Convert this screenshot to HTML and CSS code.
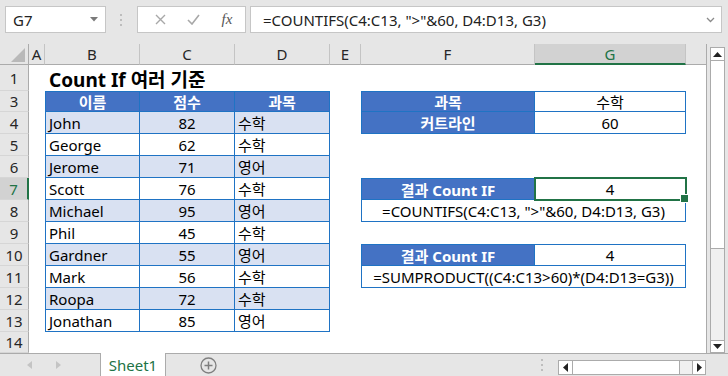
FILE: index.html
```html
<!DOCTYPE html>
<html lang="ko">
<head>
    <meta charset="UTF-8">
    <title>Count If 여러 기준</title>
    <link rel="stylesheet" href="styles.css">
</head>
<body>
    <div class="formula-bar">
        <div class="name-box">
            <span>G7</span>
            <svg width="8" height="5" viewBox="0 0 8 5"><path d="M0 0h8L4 4.5z" fill="#7a7a7a"/></svg>
        </div>
        <div class="grip">
            <svg width="3" height="12" viewBox="0 0 3 12"><rect x="0" y="0" width="2" height="2" fill="#bdbdbd"/><rect x="0" y="5" width="2" height="2" fill="#bdbdbd"/><rect x="0" y="10" width="2" height="2" fill="#bdbdbd"/></svg>
        </div>
        <div class="fx-box">
            <svg width="11" height="11" viewBox="0 0 11 11"><path d="M1 1l9 9M10 1l-9 9" stroke="#a8a8a8" stroke-width="1.4" fill="none"/></svg>
            <svg width="13" height="11" viewBox="0 0 13 11"><path d="M1 6l4 4 7-9" stroke="#a8a8a8" stroke-width="1.6" fill="none"/></svg>
            <span class="fx">fx</span>
        </div>
        <div class="formula-input">
            <span>=COUNTIFS(C4:C13, "&gt;"&amp;60, D4:D13, G3)</span>
            <svg width="9" height="6" viewBox="0 0 9 6"><path d="M1 1l3.5 3.5L8 1" stroke="#8a8a8a" stroke-width="1.3" fill="none"/></svg>
        </div>
    </div>

    <div class="workspace">
        <div class="sheet">
            <div class="corner"><svg width="14" height="14" viewBox="0 0 14 14"><path d="M14 0v14H0z" fill="#b9b9b9"/></svg></div>
            <div class="ch">A</div>
            <div class="ch">B</div>
            <div class="ch">C</div>
            <div class="ch">D</div>
            <div class="ch">E</div>
            <div class="ch">F</div>
            <div class="ch active">G</div>
            <div class="ch end"></div>

            <div class="rh">1</div>
            <div></div>
            <div class="title">Count If 여러 기준</div>

            <div class="rh">3</div>
            <div></div>
            <div class="cell th first top">이름</div>
            <div class="cell th top">점수</div>
            <div class="cell th top">과목</div>
            <div></div>
            <div class="cell th first top">과목</div>
            <div class="cell num top">수학</div>
            <div></div>

            <div class="rh">4</div>
            <div></div>
            <div class="cell band first">John</div>
            <div class="cell band num">82</div>
            <div class="cell band">수학</div>
            <div></div>
            <div class="cell th first">커트라인</div>
            <div class="cell num">60</div>
            <div></div>

            <div class="rh">5</div>
            <div></div>
            <div class="cell first">George</div>
            <div class="cell num">62</div>
            <div class="cell">수학</div>
            <div class="rest"></div>

            <div class="rh">6</div>
            <div></div>
            <div class="cell band first">Jerome</div>
            <div class="cell band num">71</div>
            <div class="cell band">영어</div>
            <div class="rest"></div>

            <div class="rh active">7</div>
            <div></div>
            <div class="cell first">Scott</div>
            <div class="cell num">76</div>
            <div class="cell">수학</div>
            <div></div>
            <div class="cell th first top">결과 Count IF</div>
            <div class="cell num top selected">4</div>
            <div></div>

            <div class="rh">8</div>
            <div></div>
            <div class="cell band first">Michael</div>
            <div class="cell band num">95</div>
            <div class="cell band">영어</div>
            <div></div>
            <div class="cell num first wide">=COUNTIFS(C4:C13, "&gt;"&amp;60, D4:D13, G3)</div>
            <div></div>

            <div class="rh">9</div>
            <div></div>
            <div class="cell first">Phil</div>
            <div class="cell num">45</div>
            <div class="cell">수학</div>
            <div class="rest"></div>

            <div class="rh">10</div>
            <div></div>
            <div class="cell band first">Gardner</div>
            <div class="cell band num">55</div>
            <div class="cell band">영어</div>
            <div></div>
            <div class="cell th first top">결과 Count IF</div>
            <div class="cell num top">4</div>
            <div></div>

            <div class="rh">11</div>
            <div></div>
            <div class="cell first">Mark</div>
            <div class="cell num">56</div>
            <div class="cell">수학</div>
            <div></div>
            <div class="cell num first wide">=SUMPRODUCT((C4:C13&gt;60)*(D4:D13=G3))</div>
            <div></div>

            <div class="rh">12</div>
            <div></div>
            <div class="cell band first">Roopa</div>
            <div class="cell band num">72</div>
            <div class="cell band">수학</div>
            <div class="rest"></div>

            <div class="rh">13</div>
            <div></div>
            <div class="cell first">Jonathan</div>
            <div class="cell num">85</div>
            <div class="cell">영어</div>
            <div class="rest"></div>

            <div class="rh">14</div>
            <div class="empty-row"></div>
        </div>

        <div class="vscroll">
            <div class="sbtn"><svg width="9" height="5" viewBox="0 0 9 5"><path d="M0 5h9L4.5 0z" fill="#222"/></svg></div>
            <div class="vthumb"></div>
            <div class="vtrack"></div>
            <div class="sbtn down"><svg width="9" height="5" viewBox="0 0 9 5"><path d="M0 0h9L4.5 5z" fill="#222"/></svg></div>
        </div>
    </div>

    <div class="tabbar">
        <div class="tabnav">
            <svg width="5" height="8" viewBox="0 0 5 8"><path d="M5 0v8L0 4z" fill="#c4c4c4"/></svg>
            <svg width="5" height="8" viewBox="0 0 5 8"><path d="M0 0v8L5 4z" fill="#c4c4c4"/></svg>
        </div>
        <div class="tab">Sheet1</div>
        <div class="add-sheet">
            <svg width="17" height="17" viewBox="0 0 17 17"><circle cx="8.5" cy="8.5" r="7.5" stroke="#7f7f7f" stroke-width="1.3" fill="none"/><path d="M8.5 4.5v8M4.5 8.5h8" stroke="#7f7f7f" stroke-width="1.5"/></svg>
        </div>
        <div class="spacer"></div>
        <div class="hgrip">
            <svg width="3" height="12" viewBox="0 0 3 12"><rect x="0" y="0" width="2" height="2" fill="#bdbdbd"/><rect x="0" y="5" width="2" height="2" fill="#bdbdbd"/><rect x="0" y="10" width="2" height="2" fill="#bdbdbd"/></svg>
        </div>
        <div class="hscroll">
            <div class="hbtn"><svg width="5" height="9" viewBox="0 0 5 9"><path d="M5 0v9L0 4.5z" fill="#222"/></svg></div>
            <div class="hthumb"></div>
            <div class="htrack"></div>
            <div class="hbtn right"><svg width="5" height="9" viewBox="0 0 5 9"><path d="M0 0v9L5 4.5z" fill="#222"/></svg></div>
        </div>
    </div>
</body>
</html>
```

FILE: styles.css
```css
* {
    margin: 0;
    padding: 0;
    box-sizing: border-box;
}
body {
    width: 728px;
    height: 376px;
    overflow: hidden;
    background: #e6e6e6;
    font-family: "Noto Sans", "Noto Sans CJK KR", sans-serif;
    color: #000;
}

/* formula bar */
.formula-bar {
    height: 44px;
    display: flex;
    align-items: flex-start;
    padding: 6px 6px 0 5px;
}
.name-box {
    width: 101px;
    height: 27px;
    background: #fff;
    border: 1px solid #c6c6c6;
    display: flex;
    align-items: center;
    justify-content: space-between;
    padding: 0 7px 0 7px;
    font-size: 15px;
    color: #222;
}
.grip {
    width: 31px;
    height: 27px;
    display: flex;
    align-items: center;
    justify-content: center;
}
.fx-box {
    width: 109px;
    height: 27px;
    background: #fff;
    border: 1px solid #c6c6c6;
    display: flex;
    align-items: center;
    justify-content: space-around;
    padding: 0 2px 0 6px;
}
.fx {
    font-family: "Liberation Serif", serif;
    font-style: italic;
    font-size: 15px;
    color: #555;
}
.formula-input {
    flex: 1;
    margin-left: 4px;
    height: 27px;
    background: #fff;
    border: 1px solid #c6c6c6;
    display: flex;
    align-items: center;
    justify-content: space-between;
    padding: 0 6px 0 12px;
    font-size: 15px;
    color: #222;
    white-space: pre;
}

/* worksheet */
.workspace {
    display: flex;
    height: 309px;
}
.sheet {
    width: 707px;
    background: #fff;
    border-right: 1px solid #ababab;
    display: grid;
    grid-template-columns: 29px 16px 95px 95px 95px 31px 174px 151px 1fr;
    grid-template-rows: 21px 26px 21px repeat(10, 22px) 21px;
    font-size: 15px;
}
.corner {
    background: #e6e6e6;
    border-right: 1px solid #ababab;
    border-bottom: 1px solid #ababab;
    display: flex;
    align-items: flex-end;
    justify-content: flex-end;
    padding: 0 3px 2px 0;
}
.ch {
    background: #e6e6e6;
    border-right: 1px solid #c4c4c4;
    border-bottom: 1px solid #ababab;
    display: flex;
    align-items: center;
    justify-content: center;
    color: #262626;
}
.ch.active {
    background: #d2d2d2;
    border-bottom: 2px solid #217346;
    color: #217346;
}
.ch.end {
    border-right: none;
}
.rh {
    background: #e6e6e6;
    border-right: 1px solid #ababab;
    border-bottom: 1px solid #d6d6d6;
    display: flex;
    align-items: center;
    justify-content: center;
    color: #262626;
}
.rh.active {
    background: #d2d2d2;
    border-right: 2px solid #217346;
    color: #217346;
}
.title {
    grid-column: span 7;
    display: flex;
    align-items: center;
    padding: 2px 0 0 4px;
    font-size: 19px;
    font-weight: bold;
    white-space: nowrap;
}
.rest {
    grid-column: span 4;
}
.empty-row {
    grid-column: span 8;
}

.cell {
    display: flex;
    align-items: center;
    padding: 0 3px;
    white-space: nowrap;
    border-right: 1px solid #1f73c4;
    border-bottom: 1px solid #1f73c4;
}
.cell.first {
    border-left: 1px solid #1f73c4;
}
.cell.top {
    border-top: 1px solid #1f73c4;
}
.cell.band {
    background: #d9e1f2;
}
.cell.num {
    justify-content: center;
}
.cell.th {
    background: #4472c4;
    color: #fff;
    font-weight: bold;
    justify-content: center;
}
.cell.wide {
    grid-column: span 2;
}
.cell.selected {
    position: relative;
    outline: 2px solid #217346;
    outline-offset: -1px;
    z-index: 1;
}
.cell.selected::after {
    content: "";
    position: absolute;
    right: -4px;
    bottom: -4px;
    width: 7px;
    height: 7px;
    background: #217346;
    border: 1px solid #fff;
}

/* vertical scrollbar */
.vscroll {
    width: 21px;
    padding: 3px 3px 0 3px;
    display: flex;
    flex-direction: column;
}
.sbtn {
    height: 14px;
    background: #fff;
    border: 1px solid #ababab;
    display: flex;
    align-items: center;
    justify-content: center;
}
.sbtn.down {
    height: 13px;
}
.vthumb {
    height: 188px;
    background: #fff;
    border: 1px solid #ababab;
    border-top: none;
}
.vtrack {
    flex: 1;
    background: #f0f0f0;
    border-left: 1px solid #ababab;
    border-right: 1px solid #ababab;
}

/* sheet tabs */
.tabbar {
    height: 23px;
    border-top: 1px solid #ababab;
    display: flex;
    align-items: stretch;
}
.tabnav {
    width: 100px;
    display: flex;
    align-items: center;
    padding-left: 27px;
    gap: 24px;
}
.tab {
    width: 66px;
    margin-top: -1px;
    background: #fff;
    border-left: 1px solid #ababab;
    border-right: 1px solid #ababab;
    display: flex;
    align-items: center;
    justify-content: center;
    color: #217346;
    font-size: 15px;
}
.add-sheet {
    width: 84px;
    display: flex;
    align-items: center;
    justify-content: center;
}
.spacer {
    flex: 1;
}
.hgrip {
    width: 16px;
    display: flex;
    align-items: center;
    justify-content: center;
}
.hscroll {
    width: 148px;
    height: 15px;
    margin: 6px 22px 0 8px;
    display: flex;
}
.hbtn {
    width: 15px;
    background: #fff;
    border: 1px solid #ababab;
    display: flex;
    align-items: center;
    justify-content: center;
}
.hbtn.right {
    width: 14px;
}
.hthumb {
    width: 107px;
    background: #fff;
    border: 1px solid #ababab;
    border-left: none;
}
.htrack {
    flex: 1;
    background: #f0f0f0;
    border-top: 1px solid #ababab;
    border-bottom: 1px solid #ababab;
}
```
